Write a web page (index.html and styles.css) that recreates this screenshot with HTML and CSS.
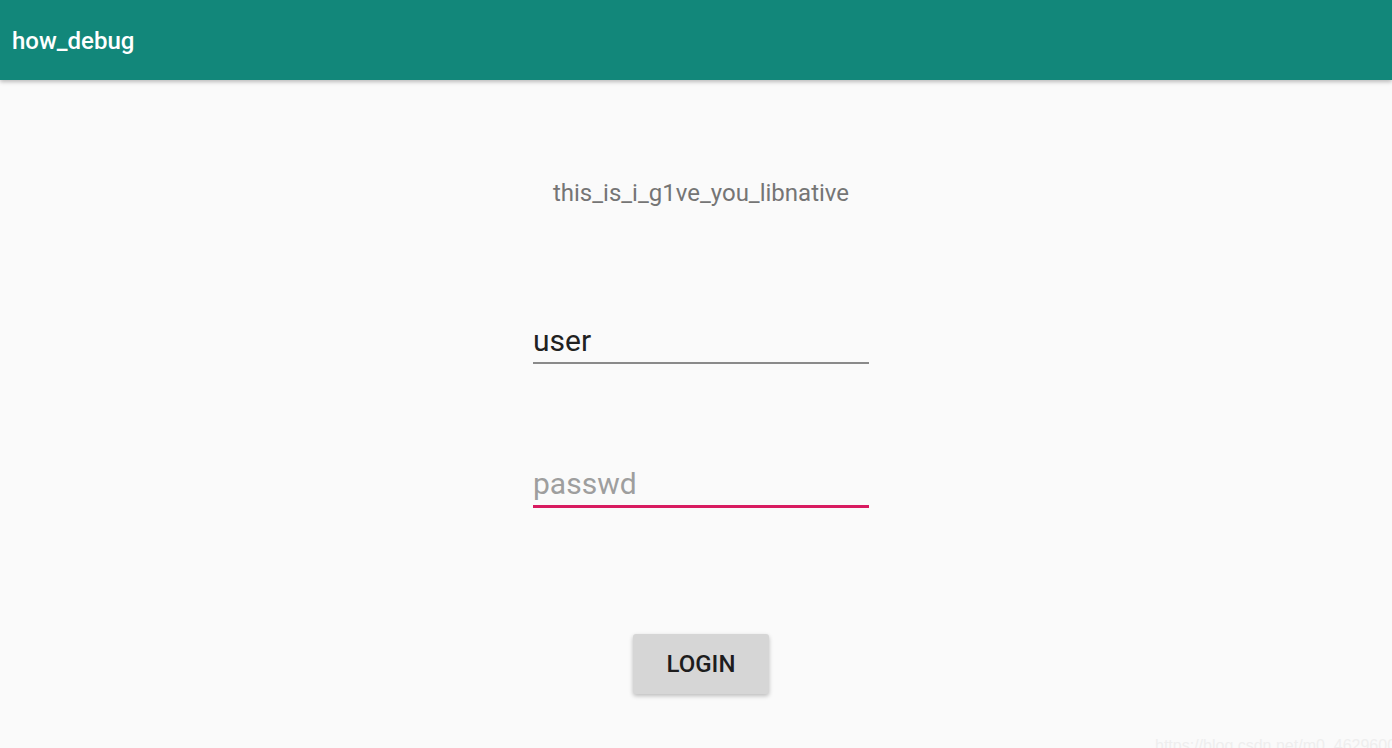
FILE: index.html
```html
<!DOCTYPE html>
<html>
<head>
<meta charset="utf-8">
<link rel="stylesheet" href="styles.css">
</head>
<body>
<header class="appbar"><span class="title">how_debug</span></header>
<main class="content">
  <div class="label">this_is_i_g1ve_you_libnative</div>
  <div class="field field-user"><span class="value">user</span></div>
  <div class="field field-pass focused"><span class="hint">passwd</span></div>
  <button class="login">LOGIN</button>
</main>
<div class="watermark">https://blog.csdn.net/m0_46296000</div>
</body>
</html>
```
FILE: styles.css
```css
html, body {
  margin: 0;
  padding: 0;
  height: 100%;
  overflow: hidden;
}
body {
  background: #fafafa;
  font-family: Roboto, "Noto Sans", sans-serif;
  position: relative;
}
.appbar {
  height: 80px;
  background: #12877a;
  display: flex;
  align-items: center;
  padding-left: 12px;
  box-shadow: 0 2px 4px rgba(0,0,0,0.25);
  position: relative;
  z-index: 1;
}
.title {
  color: #ffffff;
  font-size: 24px;
  font-weight: 500;
  margin-top: 2px;
}
.content {
  display: flex;
  flex-direction: column;
  align-items: center;
  padding-left: 10px;
}
.label {
  margin-top: 98px;
  font-size: 24px;
  line-height: 30px;
  color: #757575;
}
.field {
  width: 336px;
  height: 46px;
  box-sizing: border-box;
  display: flex;
  align-items: flex-end;
  padding-bottom: 4px;
  font-size: 30px;
}
.field-user {
  margin-top: 110px;
  border-bottom: 2px solid #8a8a8a;
}
.field-pass {
  margin-top: 98px;
  border-bottom: 3px solid #d81b60;
}
.value { color: #212121; }
.hint { color: #9e9e9e; }
.login {
  margin-top: 126px;
  width: 136px;
  height: 60px;
  border: none;
  border-radius: 3px;
  background: #d6d6d6;
  font-family: Roboto, "Noto Sans", sans-serif;
  font-weight: 500;
  font-size: 24px;
  color: #1d1d1d;
  box-shadow: 0 2px 4px rgba(0,0,0,0.25);
}
.watermark {
  position: absolute;
  left: 1155px;
  bottom: -7px;
  white-space: nowrap;
  font-family: Arial, "Liberation Sans", sans-serif;
  font-size: 16px;
  color: #eeeeee;
}
```
